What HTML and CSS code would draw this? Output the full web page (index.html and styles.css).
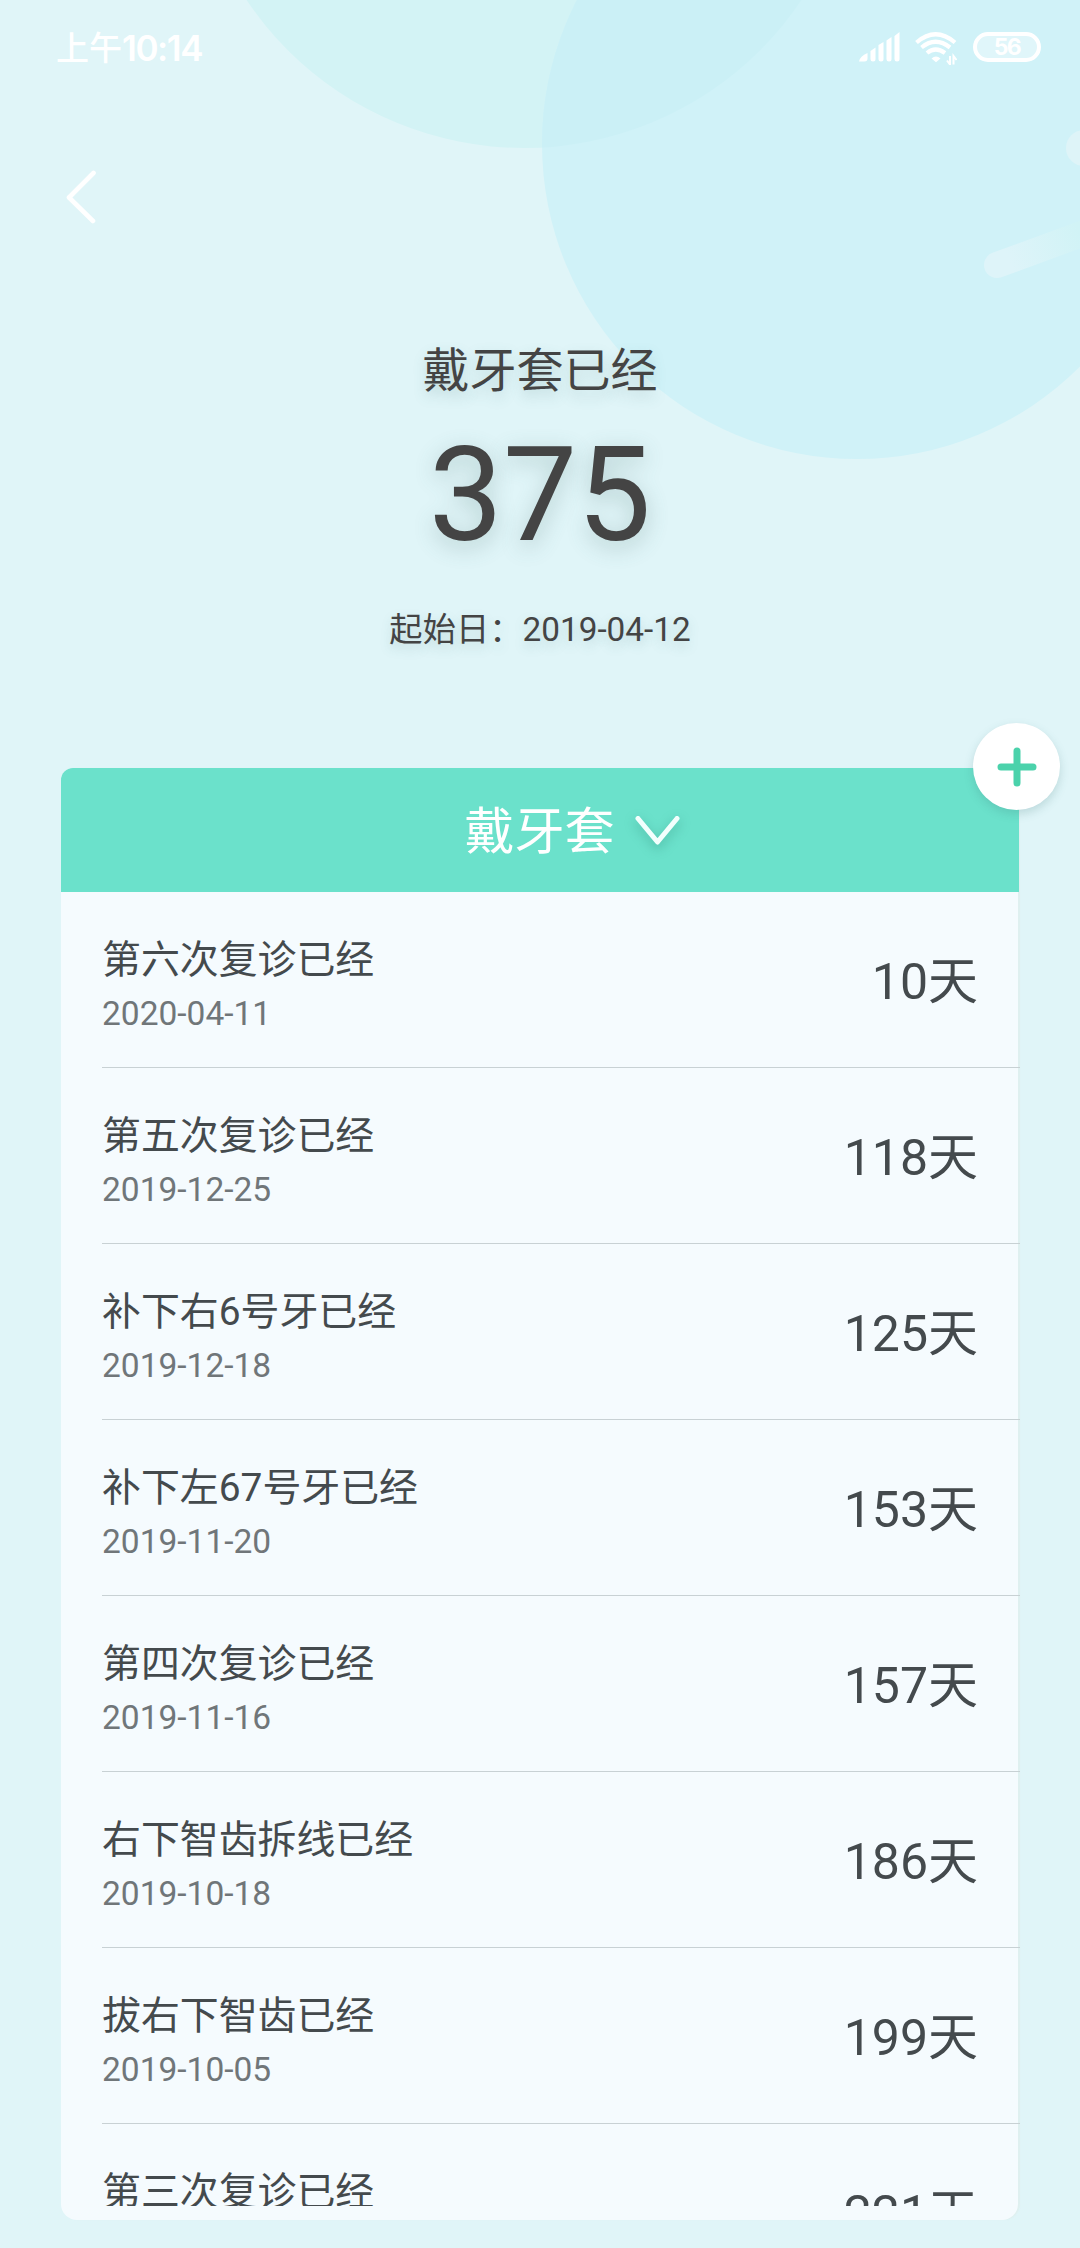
FILE: index.html
```html
<!DOCTYPE html>
<html lang="zh-CN">
<head>
<meta charset="utf-8">
<title>戴牙套</title>
<link rel="stylesheet" href="styles.css">
</head>
<body>
<div class="screen">
  <svg class="backdrop" width="1080" height="480" viewBox="0 0 1080 480" aria-hidden="true">
    <defs>
      <linearGradient id="tail" gradientUnits="userSpaceOnUse" x1="997" y1="266" x2="1080" y2="234">
        <stop offset="0" stop-color="#def4f9"/><stop offset=".15" stop-color="#def4f9"/><stop offset="1" stop-color="#d1f3f6"/>
      </linearGradient>
      <clipPath id="big"><circle cx="857" cy="144" r="315"/></clipPath>
    </defs>
    <circle cx="524" cy="-186" r="334" fill="#d3f3f5"/>
    <circle cx="857" cy="144" r="315" fill="#d0f2f8"/>
    <circle cx="524" cy="-186" r="334" fill="#cbf0f6" clip-path="url(#big)"/>
    <circle cx="1084" cy="148" r="18" fill="#def4f8"/>
    <path d="M997 265 1090 231" stroke="url(#tail)" stroke-width="26" stroke-linecap="round"/>
  </svg>

  <header class="status">
    <span class="clock">上午<span class="time">10:14</span></span>
    <div class="indicators">
      <svg class="signal" width="41" height="30" viewBox="0 0 41 30" fill="#fff">
        <path d="M0 29.5Q1 24 8.500 21v5.500q0 3-3 3z"/>
        <path d="M11.500 19l5-3.500v11.500q0 2.500-2.500 2.500t-2.500-2.500z"/>
        <path d="M19.500 13l5-3v17q0 2.500-2.500 2.500t-2.500-2.500z"/>
        <path d="M27.500 8.500l5-3.500v22q0 2.500-2.500 2.500t-2.500-2.500z"/>
        <path d="M35.500 4l5-4v27q0 2.500-2.500 2.500t-2.500-2.500z"/>
      </svg>
      <svg class="wifi" width="42" height="33" viewBox="0 0 42 33" fill="none" stroke="#fff" stroke-width="4.200">
        <path d="M1.500 10.500Q20.500-6 40 10.500"/>
        <path d="M6.500 15.500Q20.500 4 35 15.500"/>
        <path d="M12 21Q20.500 14 30 21"/>
        <path d="M16.500 26.500q4.500-4 9 0l-4.500 3.800z" fill="#fff" stroke="none"/>
        <path d="M35 24v8.500l-3-4M38.500 32.500V24l3 4" stroke-width="2"/>
      </svg>
      <span class="battery">56</span>
    </div>
  </header>

  <nav class="nav">
    <svg width="32" height="54" viewBox="0 0 32 54" fill="none" stroke="#fff" stroke-width="4.600" stroke-linecap="round" stroke-linejoin="round">
      <path d="M28.500 3 4 27.500 28 51"/>
    </svg>
  </nav>

  <section class="summary">
    <h1 class="summary-title">戴牙套已经</h1>
    <div class="summary-days">375</div>
    <div class="summary-start">起始日：2019-04-12</div>
  </section>

  <main class="card">
    <div class="card-head">
      <span class="card-title">戴牙套</span>
      <svg class="chevron" width="46" height="32" viewBox="0 0 46 32" fill="none" stroke="#f3fffd" stroke-width="5" stroke-linecap="round" stroke-linejoin="round">
        <path d="M3 4.500 22.500 28 42 4.500"/>
      </svg>
    </div>
    <button class="add" aria-label="添加">
      <svg width="40" height="40" viewBox="0 0 40 40" stroke="#4bd2ab" stroke-width="7" stroke-linecap="round">
        <path d="M20 4v32M4 20h32"/>
      </svg>
    </button>
    <ul class="list">
      <li class="row"><div><div class="name">第六次复诊已经</div><div class="date">2020-04-11</div></div><div class="days">10天</div></li>
      <li class="row"><div><div class="name">第五次复诊已经</div><div class="date">2019-12-25</div></div><div class="days">118天</div></li>
      <li class="row"><div><div class="name">补下右6号牙已经</div><div class="date">2019-12-18</div></div><div class="days">125天</div></li>
      <li class="row"><div><div class="name">补下左67号牙已经</div><div class="date">2019-11-20</div></div><div class="days">153天</div></li>
      <li class="row"><div><div class="name">第四次复诊已经</div><div class="date">2019-11-16</div></div><div class="days">157天</div></li>
      <li class="row"><div><div class="name">右下智齿拆线已经</div><div class="date">2019-10-18</div></div><div class="days">186天</div></li>
      <li class="row"><div><div class="name">拔右下智齿已经</div><div class="date">2019-10-05</div></div><div class="days">199天</div></li>
      <li class="row"><div><div class="name">第三次复诊已经</div></div><div class="days">221天</div></li>
    </ul>
  </main>
</div>
</body>
</html>
```
FILE: styles.css
```css
* { box-sizing: border-box; }

body {
  margin: 0;
  background: #e0f5f8;
  color: #444a4d;
  font-family: Roboto, "Noto Sans CJK SC", sans-serif;
}

.screen {
  position: relative;
  display: flex;
  flex-direction: column;
  width: 1080px;
  height: 2248px;
  overflow: hidden;
}

.backdrop {
  position: absolute;
  top: 0;
  left: 0;
  z-index: -1;
}

.status {
  display: flex;
  justify-content: space-between;
  align-items: center;
  height: 94px;
  padding: 0 39px 0 56px;
  color: #fff;
}

.clock {
  display: flex;
  align-items: center;
  padding-bottom: 2px;
  font: 500 33px/40px "Noto Sans CJK SC", sans-serif;
}

.time {
  font: 600 35px/40px Inter, sans-serif;
  letter-spacing: -1.400px;
  padding-top: 4px;
}

.indicators { display: flex; align-items: center; }
.signal { margin-right: 15px; }
.wifi { margin: 3px 16px 0 0; }

.battery {
  width: 68px;
  height: 30px;
  border: 4px solid #fff;
  border-radius: 15px;
  background: #e0f6fa;
  font: 700 23px/22px Inter, sans-serif;
  letter-spacing: -1.500px;
  text-align: center;
}

.nav {
  display: flex;
  align-items: center;
  height: 206px;
  padding: 0 0 1px 65px;
}

.summary {
  display: flex;
  flex-direction: column;
  align-items: center;
  height: 468px;
  padding-top: 36px;
  color: #444;
}

.summary-title {
  margin: 0;
  font-size: 47px;
  font-weight: 400;
  line-height: 70px;
  text-shadow: 0 6px 14px rgba(70, 120, 120, .24);
}

.summary-days {
  font-size: 132px;
  line-height: 156px;
  margin-top: 11px;
  text-shadow: 0 6px 22px rgba(70, 110, 105, .3);
}

.summary-start {
  font-size: 33.300px;
  line-height: 50px;
  margin-top: 32px;
  text-shadow: 0 5px 12px rgba(70, 120, 120, .22);
}

.card {
  position: relative;
  display: flex;
  flex-direction: column;
  width: 957px;
  height: 1452px;
  margin-left: 61px;
  padding-bottom: 14px;
  border-radius: 12px 12px 16px 16px;
  background: #f5fbfe;
  box-shadow: 2px 0 1px rgba(222, 239, 238, .8);
}

.card-head {
  flex: none;
  display: flex;
  align-items: center;
  justify-content: center;
  gap: 20px;
  width: 958px;
  height: 124px;
  padding-left: 65px;
  border-radius: 12px 0 0 0;
  background: #6be1cb;
  color: #fff;
  font-size: 50px;
}

.card-title { padding-bottom: 6px; }

.chevron { filter: drop-shadow(0 4px 6px rgba(30, 120, 100, .4)); }

.add {
  position: absolute;
  top: -45px;
  right: -42px;
  display: grid;
  place-items: center;
  width: 87px;
  height: 87px;
  padding: 0;
  border: 0;
  border-radius: 50%;
  background: #fff;
  box-shadow: 0 4px 10px rgba(60, 120, 120, .22);
}

.list {
  flex: 1;
  min-height: 0;
  width: 959px;
  margin: 0;
  padding: 0 0 0 41px;
  overflow: hidden;
  list-style: none;
}

.row {
  display: flex;
  justify-content: space-between;
  height: 176px;
  padding: 39px 42px 0 0;
  border-bottom: 1px solid #c8d1d4;
}

.name { font-size: 38.900px; line-height: 58px; }
.date { font-size: 33.500px; line-height: 50px; color: #707679; }
.days { font-size: 50px; line-height: 70px; padding-top: 16px; }
```
